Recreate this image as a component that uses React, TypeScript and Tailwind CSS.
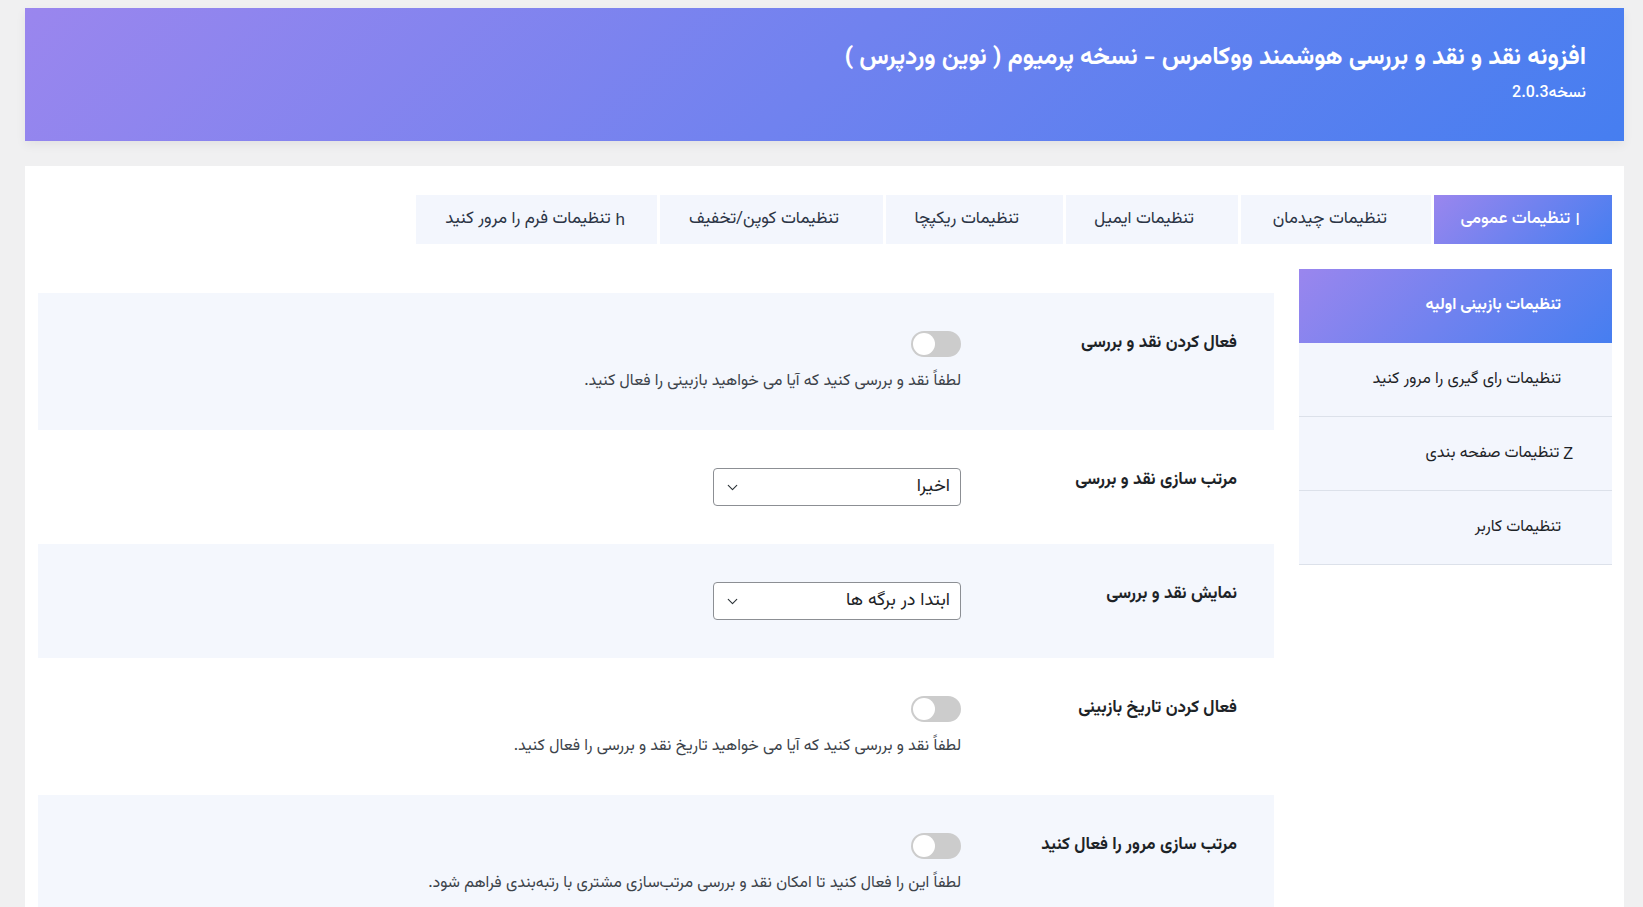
import { ChevronDown } from 'lucide-react';

const fa = "font-['Vazirmatn','Noto_Sans_Arabic','DejaVu_Sans',sans-serif]";

const tabs = [
  { title: 'تنظیمات عمومی', icon: 'I', width: 'w-[178px]', active: true },
  { title: 'تنظیمات چیدمان', icon: '', width: 'w-[190px]' },
  { title: 'تنظیمات ایمیل', icon: '', width: 'w-[172px]' },
  { title: 'تنظیمات ریکپچا', icon: '', width: 'w-[177px]' },
  { title: 'تنظیمات کوپن/تخفیف', icon: '', width: 'w-[223px]' },
  { title: 'تنظیمات فرم را مرور کنید', icon: 'h', width: 'w-[241px]' }
];

const sideItems = [
  { title: 'تنظیمات بازبینی اولیه', icon: '', active: true },
  { title: 'تنظیمات رای گیری را مرور کنید', icon: '' },
  { title: 'تنظیمات صفحه بندی', icon: 'Z' },
  { title: 'تنظیمات کاربر', icon: '' }
];

// Toggle switch (off state)
function Toggle() {
  return (
    <div dir="ltr" className="w-[50px] h-[26px] rounded-full bg-[#cccccc] flex items-center px-[2px]">
      <div className="w-[22px] h-[22px] rounded-full bg-white" />
    </div>
  );
}

function FakeSelect({ value }: { value: string }) {
  return (
    <div className="w-[248px] h-[38px] border border-[#8c8f94] rounded-[4px] bg-white flex items-center justify-between pr-[10px] pl-[10px]">
      <span className="text-[18px] text-[#1d2327]">{value}</span>
      <ChevronDown className="w-[17px] h-[17px] text-[#2c3338]" strokeWidth={1.6} />
    </div>
  );
}

function Row({
  label,
  shaded,
  children
}: {
  label: string;
  shaded?: boolean;
  children: React.ReactNode;
}) {
  return (
    <div className={`flex py-[38px] ${shaded ? 'bg-[#f4f7fd]' : 'bg-white'}`}>
      <div className="w-[313px] shrink-0 pr-[37px] text-[17px] font-bold leading-[24px] text-[#1d2327]">
        {label}
      </div>
      <div className="flex flex-col items-start">{children}</div>
    </div>
  );
}

function Desc({ children }: { children: React.ReactNode }) {
  return <p className="mt-[15px] text-[16px] leading-[20px] text-[#3c434a]">{children}</p>;
}

export default function App() {
  return (
    <div dir="rtl" className={`min-h-screen bg-[#f0f0f1] pt-[8px] pl-[25px] pr-[19px] ${fa}`}>
      {/* Header */}
      <header className="h-[133px] bg-[linear-gradient(135deg,#9a86ee,#467ef0)] pt-[34px] pr-[38px] shadow-[0_4px_10px_rgba(0,0,0,0.06)]">
        <h1 className="text-[24.5px] font-bold leading-[32px] text-white">
          افزونه نقد و نقد و بررسی هوشمند ووکامرس - نسخه پرمیوم ( نوین وردپرس )
        </h1>
        <p className="mt-[10px] text-[16px] font-medium leading-[20px] text-white">نسخه2.0.3</p>
      </header>

      {/* Main card */}
      <div className="mt-[25px] bg-white pt-[29px] pr-[12px] pl-[13px] h-[741px] overflow-hidden">
        {/* Tabs */}
        <div className="flex gap-[3px]">
          {tabs.map(tab => (
            <div
              key={tab.title}
              className={`${tab.width} h-[49px] flex items-center text-[17px] whitespace-nowrap ${
                tab.active
                  ? 'bg-[linear-gradient(135deg,#9a86ee,#467ef0)] text-white font-medium'
                  : 'bg-[#f3f6fd] text-[#2b3445]'
              } ${tab.icon ? 'pr-[32px]' : 'pr-[44px]'}`}
            >
              {tab.icon && <span className="font-['Liberation_Sans',sans-serif] ml-[5px]">{tab.icon}</span>}
              {tab.title}
            </div>
          ))}
        </div>

        <div className="flex mt-[25px] gap-[25px] items-start">
          {/* Side menu */}
          <div className="w-[313px] shrink-0">
            {sideItems.map(item => (
              <div
                key={item.title}
                className={`h-[74px] flex items-center pr-[51px] text-[16px] whitespace-nowrap ${
                  item.active
                    ? 'bg-[linear-gradient(135deg,#9a86ee,#467ef0)] text-white font-bold'
                    : 'bg-[#f3f6fd] text-[#1d2327] border-b border-[#dce1ea]'
                }`}
              >
                {item.icon && (
                  <span className="-mr-[12px] ml-[4px] font-['Liberation_Sans',sans-serif]">{item.icon}</span>
                )}
                {item.title}
              </div>
            ))}
          </div>

          {/* Settings rows */}
          <div className="flex-1 mt-[24px]">
            <Row label="فعال کردن نقد و بررسی" shaded>
              <Toggle />
              <Desc>لطفاً نقد و بررسی کنید که آیا می خواهید بازبینی را فعال کنید.</Desc>
            </Row>
            <Row label="مرتب سازی نقد و بررسی">
              <FakeSelect value="اخیرا" />
            </Row>
            <Row label="نمایش نقد و بررسی" shaded>
              <FakeSelect value="ابتدا در برگه ها" />
            </Row>
            <Row label="فعال کردن تاریخ بازبینی">
              <Toggle />
              <Desc>لطفاً نقد و بررسی کنید که آیا می خواهید تاریخ نقد و بررسی را فعال کنید.</Desc>
            </Row>
            <Row label="مرتب سازی مرور را فعال کنید" shaded>
              <Toggle />
              <Desc>لطفاً این را فعال کنید تا امکان نقد و بررسی مرتب‌سازی مشتری با رتبه‌بندی فراهم شود.</Desc>
            </Row>
          </div>
        </div>
      </div>
    </div>
  );
}
